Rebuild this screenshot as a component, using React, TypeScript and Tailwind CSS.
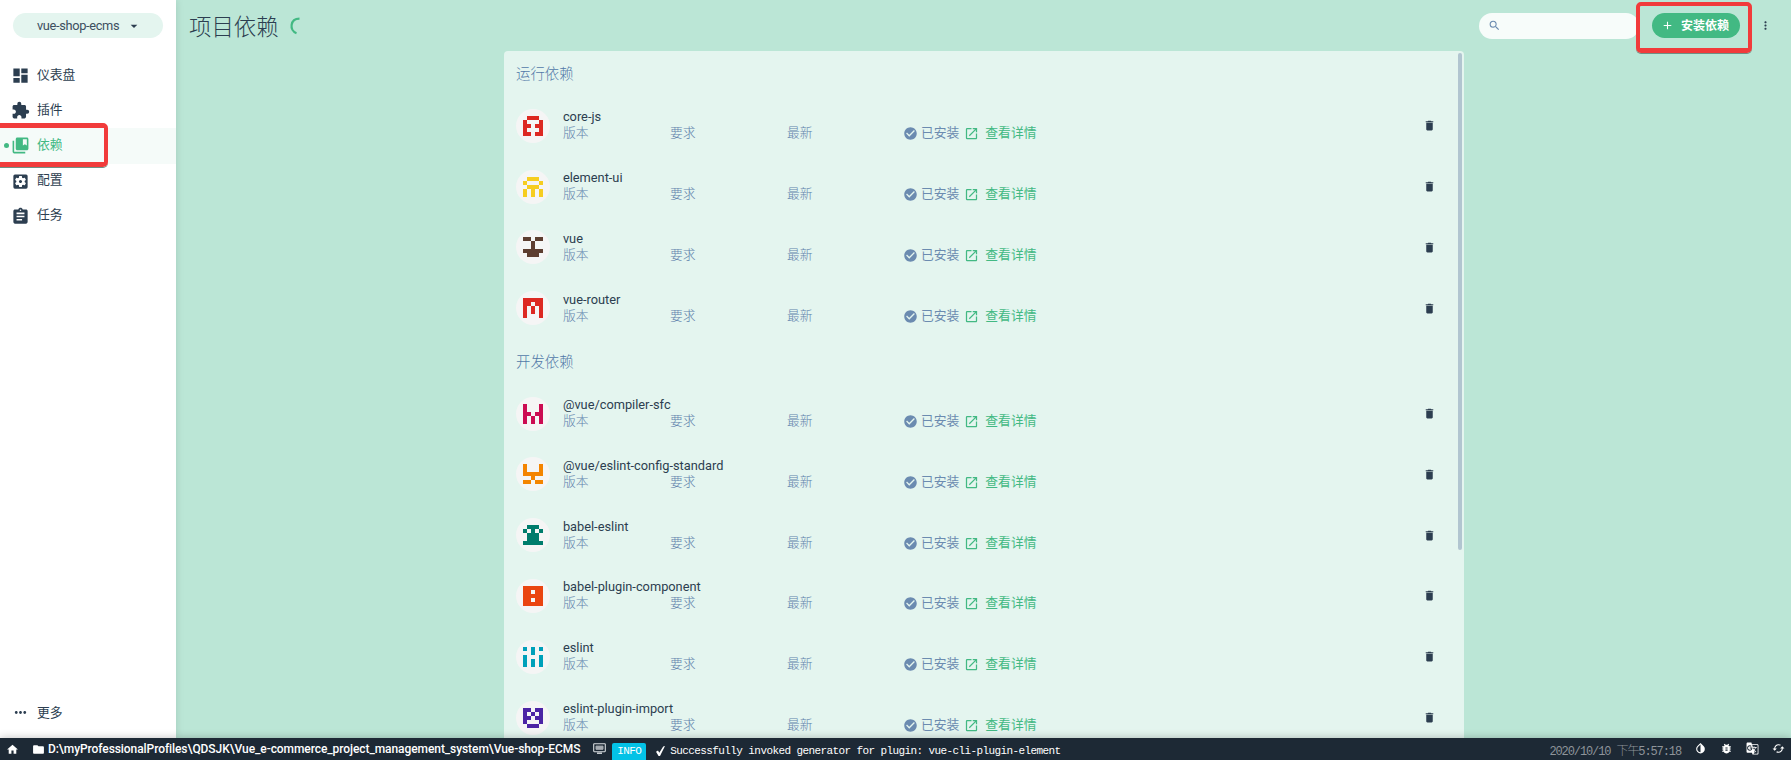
import React from 'react';
import {
  MdDashboard, MdExtension, MdCollectionsBookmark, MdSettingsApplications, MdAssignment, MdMoreHoriz, MdHome,
  MdFolder, MdCheckCircle, MdOpenInNew, MdDelete, MdMoreVert, MdAdd, MdSearch, MdArrowDropDown,
  MdInvertColors, MdBugReport, MdGTranslate, MdCached,
} from 'react-icons/md';

type Dependency = { name: string; color: string; cells: string[] };

const runtime: Dependency[] = [
  { name: 'core-js', color: '#dd2822', cells: ['01110', '10001', '11011', '10001', '11011'] },
  { name: 'element-ui', color: '#f6cd20', cells: ['01110', '10001', '01110', '10101', '10101'] },
  { name: 'vue', color: '#5d3d30', cells: ['11011', '00100', '00100', '11111', '01110'] },
  { name: 'vue-router', color: '#dd2822', cells: ['11111', '11011', '10101', '10101', '10001'] },
];

const development: Dependency[] = [
  { name: '@vue/compiler-sfc', color: '#cc0b52', cells: ['10001', '10001', '11011', '10101', '10101'] },
  { name: '@vue/eslint-config-standard', color: '#f48400', cells: ['10001', '10001', '11111', '00100', '11011'] },
  { name: 'babel-eslint', color: '#007c6c', cells: ['01110', '10101', '01110', '01110', '11111'] },
  { name: 'babel-plugin-component', color: '#ea4410', cells: ['11111', '11011', '11111', '11011', '11111'] },
  { name: 'eslint', color: '#00a0ba', cells: ['10101', '00100', '10001', '10101', '10101'] },
  { name: 'eslint-plugin-import', color: '#4c24a5', cells: ['11011', '10101', '11011', '10001', '01110'] },
];

function Identicon({ color, cells }: { color: string; cells: string[] }) {
  return (
    <div className="flex size-[34px] shrink-0 items-center justify-center rounded-full bg-[#f5f5f5]">
      <svg width="20" height="20" viewBox="0 0 5 5" fill={color} shapeRendering="crispEdges">
        {cells.map((row, y) =>
          row.split('').map((c, x) => (c === '1' ? <rect key={`${x}-${y}`} x={x} y={y} width="1" height="1" /> : null)),
        )}
      </svg>
    </div>
  );
}

function Row({ dep }: { dep: Dependency }) {
  return (
    <div className="flex h-[60.8px] items-center pr-[22px] pl-3">
      <Identicon color={dep.color} cells={dep.cells} />
      <div className="ml-[13.4px] flex-1 text-[12.8px] leading-4">
        <div className="h-[17px] text-[#2c3e50]">{dep.name}</div>
        <div className="-mt-px mb-px flex h-4 items-center font-light text-[#5f82ac]">
          <span className="w-[107px]">版本</span>
          <span className="w-[117px]">要求</span>
          <span className="w-[116px]">最新</span>
          <MdCheckCircle className="mt-px size-[15px] text-[#6b8bb0]" />
          <span className="ml-[3px] font-normal text-[#6b8bb0]">已安装</span>
          <MdOpenInNew className="mt-px ml-[5px] size-[15px] text-[#42b983]" />
          <span className="ml-1.5 font-normal text-[#42b983]">查看详情</span>
        </div>
      </div>
      <MdDelete className="size-[13px] text-[#2c3e50]" />
    </div>
  );
}

function Section({ title, items }: { title: string; items: Dependency[] }) {
  return (
    <section>
      <h2 className="flex h-[44.5px] items-center pt-1 pl-[12.5px] text-[14.4px] font-light text-[#5279a8]">{title}</h2>
      {items.map((dep) => (
        <Row key={dep.name} dep={dep} />
      ))}
    </section>
  );
}

const nav = [
  { label: '仪表盘', Icon: MdDashboard },
  { label: '插件', Icon: MdExtension },
  { label: '依赖', Icon: MdCollectionsBookmark },
  { label: '配置', Icon: MdSettingsApplications },
  { label: '任务', Icon: MdAssignment },
];

export default function App() {
  return (
    <div className="flex h-[760px] w-[1791px] flex-col overflow-hidden bg-[#bbe6d6] font-[Roboto,'Noto_Sans_CJK_SC',sans-serif] text-[12.8px] text-[#2c3e50]">
      <div className="flex h-[738px] shrink-0">
        <aside className="z-10 flex w-44 shrink-0 flex-col bg-white shadow-[0_0_8px_rgba(0,0,0,0.12)]">
          <div className="mt-[13px] ml-[13px] flex h-[25px] w-[150px] items-center rounded-full bg-[#e4f5ef] pl-6">
            <span className="tracking-[-0.33px] text-[#3d4f5f]">vue-shop-ecms</span>
            <MdArrowDropDown className="ml-[7px] size-4" />
          </div>
          <nav className="mt-5">
            {nav.map(({ label, Icon }, i) => (
              <div
                key={label}
                className={
                  i === 2
                    ? 'relative flex h-[35.2px] items-center bg-[#f5fbf9] pl-[11px] text-[#42b983]'
                    : 'flex h-[35.2px] items-center pl-[11px]'
                }
              >
                {i === 2 && <i className="absolute left-1 size-[5px] rounded-full bg-[#42b983]" />}
                {i === 2 && (
                  <span className="absolute top-[-5px] left-[-5px] h-[44px] w-[113px] rounded-[5px] border-[4.5px] border-y-5 border-[#f13b3b] shadow-[0_1px_0_#6f8f84]" />
                )}
                <Icon className="size-[19px]" />
                <span className="mb-[3px] ml-[7px]">{label}</span>
              </div>
            ))}
          </nav>
          <div className="mt-auto flex h-[51px] items-center pl-3">
            <MdMoreHoriz className="size-[17px]" />
            <span className="ml-2">更多</span>
          </div>
        </aside>
        <main className="flex flex-1 flex-col">
          <header className="flex h-[51px] shrink-0 items-center pl-[13px]">
            <h1 className="mt-1 text-[22.4px] font-light">项目依赖</h1>
            <svg className="ml-[9px] size-[18px]" viewBox="0 0 18 18" fill="none" stroke="#42b983" strokeWidth="2.2">
              <path d="M11.5 1.6C2 1.6 1 13.5 8.5 16.2" />
            </svg>
            <div className="ml-auto flex h-[26px] w-40 items-center rounded-full bg-[#f7fcfa] pl-[9px] text-[#6b8bb0]">
              <MdSearch className="size-[13px]" />
            </div>
            <div className="relative ml-[13px] flex h-[25px] w-[88px] items-center rounded-full bg-[#42b983] pl-[9px] text-white">
              <MdAdd className="size-[13px]" />
              <span className="ml-[7px] text-[12px] font-bold">安装依赖</span>
              <span className="absolute top-[-11px] left-[-16px] h-[51px] w-[116px] rounded-[5px] border-4 border-b-5 border-[#f13b3b] shadow-[0_1px_0_#6f8f84]" />
            </div>
            <MdMoreVert className="mr-[19px] ml-[19px] size-[13px]" />
          </header>
          <div className="mx-auto flex min-h-0 w-[960px] flex-1 rounded-t-[4px] bg-[#e4f5ef]">
            <div className="h-full flex-1 overflow-hidden">
              <Section title="运行依赖" items={runtime} />
              <Section title="开发依赖" items={development} />
            </div>
            <div className="mt-0.5 mr-[2px] h-[497px] w-1 rounded-full bg-[#b1c5d0]" />
          </div>
        </main>
      </div>
      <footer className="z-20 flex h-[22px] items-center bg-[#1d2935] text-white shadow-[0_0_8px_rgba(0,0,0,0.25)]">
        <MdHome className="ml-1.5 size-[13px]" />
        <MdFolder className="ml-[13px] size-[13px]" />
        <span className="ml-[3px] text-[12px] font-medium tracking-[-0.075px]">D:\myProfessionalProfiles\QDSJK\Vue_e-commerce_project_management_system\Vue-shop-ECMS</span>
        <svg className="mb-px ml-[13px] h-[11px] w-[13px]" viewBox="0 0 13 11" fill="none" stroke="#d8dcdf">
          <rect x="0.7" y="0.7" width="11.6" height="8" rx="0.6" strokeWidth="1.1" />
          <path d="M3 3.1h7v3.2H3z" fill="#a5abb1" stroke="#a5abb1" />
          <path d="M4 10.2h5" strokeWidth="1.4" />
        </svg>
        <div className="ml-1.5 flex items-center font-['Liberation_Mono','Noto_Sans_CJK_SC',monospace] text-[11px] tracking-[-0.6px]">
          <span className="mt-[5px] h-[17px] rounded-t-[2px] bg-[#03c2e6] px-[5px] leading-[17px]">INFO</span>
          <svg className="mt-1 ml-[9px] h-3 w-[11px]" viewBox="0 0 11 12" fill="white">
            <path d="M1 6.8 3 5.5 4.3 7.8 8.2 1.5 10 1 5 11H3.6z" />
          </svg>
          <span className="mt-[5px] ml-1">Successfully invoked generator for plugin: vue-cli-plugin-element</span>
        </div>
        <span className="mt-[5px] ml-auto font-['Liberation_Mono','Noto_Sans_CJK_SC',monospace] text-[12px] font-light tracking-[-1.1px] text-[#8e949a]">
          2020/10/10 下午5:57:18
        </span>
        <div className="mr-[6px] mb-px ml-[13px] flex gap-[13px]">
          <MdInvertColors className="size-[13px]" />
          <MdBugReport className="size-[13px]" />
          <MdGTranslate className="size-[13px]" />
          <MdCached className="size-[13px]" />
        </div>
      </footer>
    </div>
  );
}
